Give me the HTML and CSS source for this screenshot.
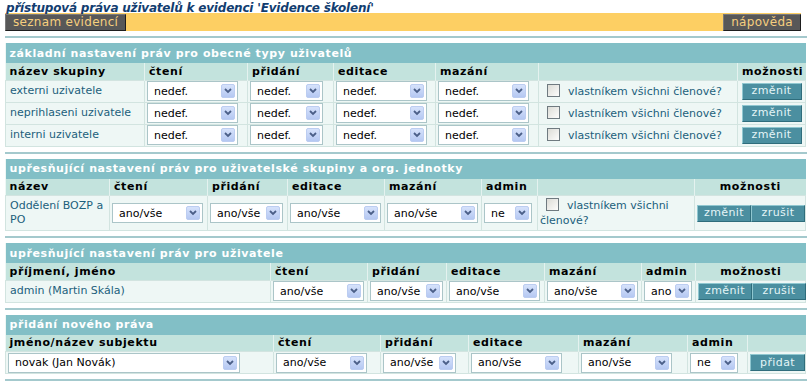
FILE: index.html
```html
<!DOCTYPE html>
<html>
<head>
  <meta charset="utf-8">
  <link rel="stylesheet" href="styles.css">
</head>
<body>
  <h1 class="page-title">přístupová práva uživatelů k evidenci 'Evidence školení'</h1>
  <div class="toolbar">
    <a class="tb-btn">seznam evidencí</a>
    <a class="tb-btn">nápověda</a>
  </div>

  <!-- zakladni prava -->
  <div class="block">
    <table class="rights">
      <colgroup>
        <col style="width:139px"><col style="width:103px"><col style="width:86px"><col style="width:102px">
        <col style="width:103px"><col style="width:199px"><col style="width:68px">
      </colgroup>
      <tr><th class="sec" colspan="7">základní nastavení práv pro obecné typy uživatelů</th></tr>
      <tr class="cols">
        <th>název skupiny</th><th>čtení</th><th>přidání</th><th>editace</th><th>mazání</th><th></th><th class="center">možnosti</th>
      </tr>
      <tr>
        <td class="name">externi uzivatele</td>
        <td><span class="sel sel-wide"><span>nedef.</span><span class="arr"><svg width="8" height="6" viewBox="0 0 8 6"><polyline points="1,1 4,4 7,1"/></svg></span></span></td>
        <td><span class="sel sel-mid"><span>nedef.</span><span class="arr"><svg width="8" height="6" viewBox="0 0 8 6"><polyline points="1,1 4,4 7,1"/></svg></span></span></td>
        <td><span class="sel sel-wide"><span>nedef.</span><span class="arr"><svg width="8" height="6" viewBox="0 0 8 6"><polyline points="1,1 4,4 7,1"/></svg></span></span></td>
        <td><span class="sel sel-wide"><span>nedef.</span><span class="arr"><svg width="8" height="6" viewBox="0 0 8 6"><polyline points="1,1 4,4 7,1"/></svg></span></span></td>
        <td class="owner"><span class="chk"></span>vlastníkem všichni členové?</td>
        <td class="actions"><button class="btn">změnit</button></td>
      </tr>
      <tr>
        <td class="name">neprihlaseni uzivatele</td>
        <td><span class="sel sel-wide"><span>nedef.</span><span class="arr"><svg width="8" height="6" viewBox="0 0 8 6"><polyline points="1,1 4,4 7,1"/></svg></span></span></td>
        <td><span class="sel sel-mid"><span>nedef.</span><span class="arr"><svg width="8" height="6" viewBox="0 0 8 6"><polyline points="1,1 4,4 7,1"/></svg></span></span></td>
        <td><span class="sel sel-wide"><span>nedef.</span><span class="arr"><svg width="8" height="6" viewBox="0 0 8 6"><polyline points="1,1 4,4 7,1"/></svg></span></span></td>
        <td><span class="sel sel-wide"><span>nedef.</span><span class="arr"><svg width="8" height="6" viewBox="0 0 8 6"><polyline points="1,1 4,4 7,1"/></svg></span></span></td>
        <td class="owner"><span class="chk"></span>vlastníkem všichni členové?</td>
        <td class="actions"><button class="btn">změnit</button></td>
      </tr>
      <tr>
        <td class="name">interni uzivatele</td>
        <td><span class="sel sel-wide"><span>nedef.</span><span class="arr"><svg width="8" height="6" viewBox="0 0 8 6"><polyline points="1,1 4,4 7,1"/></svg></span></span></td>
        <td><span class="sel sel-mid"><span>nedef.</span><span class="arr"><svg width="8" height="6" viewBox="0 0 8 6"><polyline points="1,1 4,4 7,1"/></svg></span></span></td>
        <td><span class="sel sel-wide"><span>nedef.</span><span class="arr"><svg width="8" height="6" viewBox="0 0 8 6"><polyline points="1,1 4,4 7,1"/></svg></span></span></td>
        <td><span class="sel sel-wide"><span>nedef.</span><span class="arr"><svg width="8" height="6" viewBox="0 0 8 6"><polyline points="1,1 4,4 7,1"/></svg></span></span></td>
        <td class="owner"><span class="chk"></span>vlastníkem všichni členové?</td>
        <td class="actions"><button class="btn">změnit</button></td>
      </tr>
    </table>
  </div>

  <!-- skupiny a org. jednotky -->
  <div class="block">
    <table class="rights">
      <colgroup>
        <col style="width:104px"><col style="width:98px"><col style="width:80px"><col style="width:97px">
        <col style="width:97px"><col style="width:56px"><col style="width:157px"><col style="width:111px">
      </colgroup>
      <tr><th class="sec" colspan="8">upřesňující nastavení práv pro uživatelské skupiny a org. jednotky</th></tr>
      <tr class="cols">
        <th>název</th><th>čtení</th><th>přidání</th><th>editace</th><th>mazání</th><th>admin</th><th></th><th class="center">možnosti</th>
      </tr>
      <tr class="tall">
        <td class="name">Oddělení BOZP a PO</td>
        <td><span class="sel sel-wide"><span>ano/vše</span><span class="arr"><svg width="8" height="6" viewBox="0 0 8 6"><polyline points="1,1 4,4 7,1"/></svg></span></span></td>
        <td><span class="sel sel-mid"><span>ano/vše</span><span class="arr"><svg width="8" height="6" viewBox="0 0 8 6"><polyline points="1,1 4,4 7,1"/></svg></span></span></td>
        <td><span class="sel sel-wide"><span>ano/vše</span><span class="arr"><svg width="8" height="6" viewBox="0 0 8 6"><polyline points="1,1 4,4 7,1"/></svg></span></span></td>
        <td><span class="sel sel-wide"><span>ano/vše</span><span class="arr"><svg width="8" height="6" viewBox="0 0 8 6"><polyline points="1,1 4,4 7,1"/></svg></span></span></td>
        <td><span class="sel sel-short"><span>ne</span><span class="arr"><svg width="8" height="6" viewBox="0 0 8 6"><polyline points="1,1 4,4 7,1"/></svg></span></span></td>
        <td class="owner wrap"><span class="chk"></span>vlastníkem všichni členové?</td>
        <td class="actions"><span class="btn-pair"><button class="btn">změnit</button><button class="btn">zrušit</button></span></td>
      </tr>
    </table>
  </div>

  <!-- uzivatele -->
  <div class="block">
    <table class="rights">
      <colgroup>
        <col style="width:265px"><col style="width:97px"><col style="width:79px"><col style="width:98px">
        <col style="width:97px"><col style="width:54px"><col style="width:110px">
      </colgroup>
      <tr><th class="sec" colspan="7">upřesňující nastavení práv pro uživatele</th></tr>
      <tr class="cols">
        <th>příjmení, jméno</th><th>čtení</th><th>přidání</th><th>editace</th><th>mazání</th><th>admin</th><th class="center">možnosti</th>
      </tr>
      <tr>
        <td class="name">admin (Martin Skála)</td>
        <td><span class="sel sel-wide"><span>ano/vše</span><span class="arr"><svg width="8" height="6" viewBox="0 0 8 6"><polyline points="1,1 4,4 7,1"/></svg></span></span></td>
        <td><span class="sel sel-mid"><span>ano/vše</span><span class="arr"><svg width="8" height="6" viewBox="0 0 8 6"><polyline points="1,1 4,4 7,1"/></svg></span></span></td>
        <td><span class="sel sel-wide"><span>ano/vše</span><span class="arr"><svg width="8" height="6" viewBox="0 0 8 6"><polyline points="1,1 4,4 7,1"/></svg></span></span></td>
        <td><span class="sel sel-wide"><span>ano/vše</span><span class="arr"><svg width="8" height="6" viewBox="0 0 8 6"><polyline points="1,1 4,4 7,1"/></svg></span></span></td>
        <td><span class="sel sel-short"><span>ano</span><span class="arr"><svg width="8" height="6" viewBox="0 0 8 6"><polyline points="1,1 4,4 7,1"/></svg></span></span></td>
        <td class="actions"><span class="btn-pair"><button class="btn">změnit</button><button class="btn">zrušit</button></span></td>
      </tr>
    </table>
  </div>

  <!-- nove pravo -->
  <div class="block last">
    <table class="rights">
      <colgroup>
        <col style="width:268px"><col style="width:107px"><col style="width:88px"><col style="width:110px">
        <col style="width:109px"><col style="width:60px"><col style="width:58px">
      </colgroup>
      <tr><th class="sec" colspan="7">přidání nového práva</th></tr>
      <tr class="cols">
        <th>jméno/název subjektu</th><th>čtení</th><th>přidání</th><th>editace</th><th>mazání</th><th>admin</th><th></th>
      </tr>
      <tr>
        <td><span class="sel sel-subject"><span>novak (Jan Novák)</span><span class="arr"><svg width="8" height="6" viewBox="0 0 8 6"><polyline points="1,1 4,4 7,1"/></svg></span></span></td>
        <td><span class="sel sel-wide"><span>ano/vše</span><span class="arr"><svg width="8" height="6" viewBox="0 0 8 6"><polyline points="1,1 4,4 7,1"/></svg></span></span></td>
        <td><span class="sel sel-mid"><span>ano/vše</span><span class="arr"><svg width="8" height="6" viewBox="0 0 8 6"><polyline points="1,1 4,4 7,1"/></svg></span></span></td>
        <td><span class="sel sel-wide"><span>ano/vše</span><span class="arr"><svg width="8" height="6" viewBox="0 0 8 6"><polyline points="1,1 4,4 7,1"/></svg></span></span></td>
        <td><span class="sel sel-wide"><span>ano/vše</span><span class="arr"><svg width="8" height="6" viewBox="0 0 8 6"><polyline points="1,1 4,4 7,1"/></svg></span></span></td>
        <td><span class="sel sel-short"><span>ne</span><span class="arr"><svg width="8" height="6" viewBox="0 0 8 6"><polyline points="1,1 4,4 7,1"/></svg></span></span></td>
        <td class="actions"><button class="btn">přidat</button></td>
      </tr>
    </table>
  </div>
</body>
</html>
```

FILE: styles.css
```css
* {
  box-sizing: border-box;
}

body {
  margin: 0;
  padding: 0 0 0 5px;
  width: 807px;
  font-family: "DejaVu Sans", Verdana, sans-serif;
  font-size: 11px;
  color: #000;
  background: #fff;
}

.page-title {
  margin: 0;
  padding: 2px 0 0 1px;
  height: 13px;
  font-size: 12px;
  line-height: 12px;
  font-weight: bold;
  font-style: italic;
  letter-spacing: -0.2px;
  color: #123d70;
}

.toolbar {
  display: flex;
  justify-content: space-between;
  align-items: flex-end;
  width: 796px;
  height: 18px;
  background: #fdcf63;
}

.tb-btn {
  display: block;
  height: 17px;
  padding: 0 7px;
  font-size: 12px;
  line-height: 15px;
  color: #f6cf7e;
  background: #585858;
  border: 1px solid;
  border-color: #7a7a7a #1e1e1e #1e1e1e #7a7a7a;
  letter-spacing: 0.3px;
}

.block {
  margin-top: 5px;
  padding-top: 5px;
  border-top: 2px solid #a4c9cd;
}

.block:first-of-type {
  margin-top: 6px;
}

.block.last {
  border-bottom: 2px solid #a4c9cd;
}

.rights {
  width: 800px;
  table-layout: fixed;
  border-collapse: collapse;
  background: #eef7f5;
  margin-bottom: 5px;
}

.rights th.sec {
  height: 20px;
  padding: 0 4px;
  text-align: left;
  color: #fff;
  background: #82bfc6;
  letter-spacing: 0.6px;
}

.rights tr.cols th {
  height: 17px;
  padding: 0 4px;
  text-align: left;
  background: #c3e3dd;
  border-left: 1px solid #e4f2ef;
  letter-spacing: 0.6px;
}

.rights tr.cols th:first-child {
  border-left: none;
}

.rights tr.cols th.center {
  text-align: center;
}

.rights td {
  height: 22px;
  padding: 0 2px;
  border: 1px solid #d2e4e0;
  color: #1c5f7c;
  white-space: nowrap;
}

.rights td.name {
  padding-left: 4px;
  white-space: normal;
  line-height: 14px;
}

.rights tr.tall td {
  height: 35px;
}

/* fake select */
.sel {
  display: inline-flex;
  align-items: center;
  justify-content: space-between;
  height: 20px;
  padding: 0 2px 0 6px;
  vertical-align: middle;
  color: #000;
  background: #fff;
  border: 1px solid #abc5c8;
}

.sel-wide { width: 91px; }
.sel-mid { width: 73px; }
.sel-short { width: 48px; }
.sel-subject { width: 232px; }

.arr {
  display: flex;
  align-items: center;
  justify-content: center;
  width: 14px;
  height: 14px;
  border-radius: 2px;
  background: linear-gradient(#d6e2fb, #b5c8f2);
  border: 1px solid #bccdf1;
}

.arr polyline {
  fill: none;
  stroke: #4b5f88;
  stroke-width: 1.8;
}

.owner.wrap {
  white-space: normal;
  line-height: 15px;
}

.chk {
  display: inline-block;
  width: 13px;
  height: 13px;
  margin: 0 8px 0 6px;
  vertical-align: -2px;
  border: 1px solid #6f7a80;
  background: linear-gradient(135deg, #dcdcd6, #fdfdfc);
}

.actions {
  text-align: center;
}

.btn {
  height: 17px;
  padding: 0 9px;
  font-family: inherit;
  font-size: 11px;
  line-height: 14px;
  letter-spacing: 0.4px;
  color: #e4f5f7;
  background: #4b8fa0;
  border: 1px solid;
  border-color: #90c7d0 #2f6d7c #2f6d7c #90c7d0;
  vertical-align: middle;
}

.btn-pair {
  display: inline-flex;
}

.btn-pair .btn {
  width: 54px;
  padding: 0;
}
```
